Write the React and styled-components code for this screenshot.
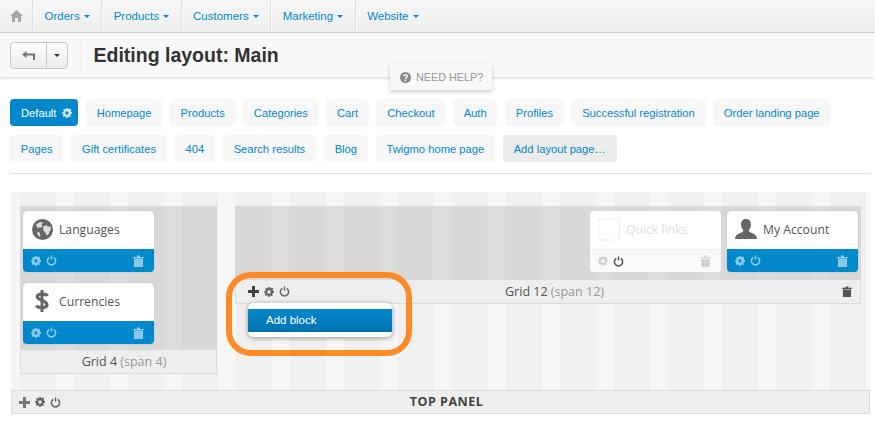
import React from 'react';
import styled, { createGlobalStyle, css } from 'styled-components';

const GlobalStyle = createGlobalStyle`
  html, body {
    margin: 0;
    padding: 0;
    background: #fff;
    font-family: "Liberation Sans", Arial, sans-serif;
  }
`;

const Page = styled.div`
  position: relative;
  width: 875px;
  height: 430px;
  overflow: hidden;
  background: #fff;
`;

/* top menu */
const Nav = styled.nav`
  display: flex;
  height: 33px;
  background: linear-gradient(#f7f7f7, #eeeeee);
  border-bottom: 1px solid #d9d9d9;
  box-sizing: border-box;
`;

const HomeItem = styled.div`
  width: 33px;
  display: flex;
  align-items: center;
  justify-content: center;
  border-right: 1px solid #dfdfdf;
  box-sizing: border-box;
`;

const NavItem = styled.a`
  display: flex;
  align-items: center;
  gap: 4px;
  padding: 0 11.5px;
  font-size: 11.5px;
  color: #0388cc;
  border-right: ${(p) => (p.$last ? 'none' : '1px solid #dfdfdf')};
  box-shadow: inset 1px 0 0 #fafafa;
`;

const Caret = styled.span`
  width: 0;
  height: 0;
  border-left: 3px solid transparent;
  border-right: 3px solid transparent;
  border-top: 3px solid ${(p) => p.$color || '#0388cc'};
`;

/* title bar */
const TitleBar = styled.header`
  display: flex;
  align-items: center;
  height: 44px;
  padding-left: 10px;
  background: #f9f9f9;
  box-shadow: 0 1px 3px rgba(0, 0, 0, 0.18);
  position: relative;
`;

const BackGroup = styled.div`
  display: flex;
  height: 27px;
  width: 58px;
  border: 1px solid #c8c8c8;
  border-radius: 4px;
  background: linear-gradient(#fdfdfd, #ececec);
  box-sizing: border-box;
`;

const BackButton = styled.div`
  width: 35px;
  display: flex;
  align-items: center;
  justify-content: center;
  border-right: 1px solid #c8c8c8;
`;

const DropButton = styled.div`
  flex: 1;
  display: flex;
  align-items: center;
  justify-content: center;
`;

const TitleDivider = styled.div`
  width: 1px;
  height: 33px;
  margin: 0 12.5px 0 12px;
  background: #efefef;
`;

const Title = styled.h1`
  margin: 0;
  font-size: 19.5px;
  font-weight: 700;
  color: #333;
`;

const HelpTab = styled.div`
  position: absolute;
  left: 390px;
  top: 64px;
  width: 102px;
  height: 26px;
  display: flex;
  align-items: center;
  gap: 5px;
  padding-left: 10px;
  box-sizing: border-box;
  background: #f8f8f8;
  box-shadow: 0 2px 4px rgba(0, 0, 0, 0.2);
  font-size: 10.8px;
  color: #9a9a9a;
  z-index: 2;
`;

/* layout tabs */
const Tabs = styled.div`
  margin: 22px 4px 0 10px;
  padding-bottom: 11px;
  border-bottom: 1px solid #e2e2e2;
  display: flex;
  flex-direction: column;
  gap: 9px;
`;

const TabRow = styled.div`
  display: flex;
  gap: ${(p) => p.$gap}px;
`;

const Tab = styled.a`
  display: flex;
  align-items: center;
  gap: 5.5px;
  height: 27px;
  padding: 0 ${(p) => (p.$active ? 6.5 : 10.8)}px 0 ${(p) => (p.$active ? 11 : 10.8)}px;
  border-radius: 4px;
  font-size: 11.2px;
  background: #f7f7f7;
  color: #0388cc;
  ${(p) =>
    p.$active &&
    css`
      background: #0388cc;
      color: #fff;
    `}
  ${(p) =>
    p.$muted &&
    css`
      background: #ececec;
      color: #0388cc;
    `}
`;

/* editor canvas */
const Canvas = styled.section`
  margin: 18px 5px 0 11px;
  padding-top: 14px;
  height: 222px;
  box-sizing: border-box;
  background: repeating-linear-gradient(
    90deg,
    #f6f6f6 0,
    #f6f6f6 9px,
    #f0f0f0 9px,
    #f0f0f0 45px,
    #f6f6f6 45px,
    #f6f6f6 54px
  );
  position: relative;
  display: flex;
  flex-direction: column;
  justify-content: space-between;
`;

const GridRow = styled.div`
  display: flex;
  align-items: flex-start;
  padding-left: 9px;
  gap: 18px;
`;

const GridBox = styled.div`
  width: ${(p) => p.$width}px;
  position: relative;
`;

const GridBody = styled.div`
  min-height: ${(p) => p.$height}px;
  box-sizing: border-box;
  padding: 5px 3px 0;
  display: flex;
  flex-direction: ${(p) => (p.$column ? 'column' : 'row')};
  justify-content: ${(p) => (p.$column ? 'flex-start' : 'flex-end')};
  gap: ${(p) => (p.$column ? 11 : 6)}px;
  background: repeating-linear-gradient(
    90deg,
    #d8d8d8 0,
    #d8d8d8 36px,
    #dcdcdc 36px,
    #dcdcdc 54px
  );
`;

const GridFooter = styled.div`
  height: 24px;
  box-sizing: border-box;
  background: #eeeeee;
  border: 1px solid #dcdcdc;
  border-top: none;
  display: flex;
  align-items: center;
  padding: 0 8px 0 12px;
  font-family: "Open Sans", sans-serif;
  font-size: 12.5px;
  color: #555;
  position: relative;
`;

const FooterLabel = styled.div`
  flex: 1;
  text-align: center;
  padding-left: ${(p) => p.$left || 0}px;
  padding-right: ${(p) => p.$right || 0}px;
  span {
    color: #999;
  }
`;

const Block = styled.div`
  width: 131px;
  height: 61px;
  border-radius: 4px;
  overflow: hidden;
  background: #fff;
  box-shadow: ${(p) => (p.$off ? 'none' : '0 0 1px 0 #888')};
  display: flex;
  flex-direction: column;
`;

const BlockHead = styled.div`
  height: 38px;
  flex: none;
  display: flex;
  align-items: center;
  padding: 0 0 2px 8px;
  gap: 6px;
  box-sizing: border-box;
  font-family: "Open Sans", sans-serif;
  font-size: 12.2px;
  color: ${(p) => (p.$off ? '#dedede' : '#555')};
`;

const BlockIcon = styled.div`
  width: 22px;
  height: 22px;
  display: flex;
  align-items: center;
  justify-content: center;
`;

const BlockTools = styled.div`
  flex: 1;
  display: flex;
  align-items: center;
  gap: 5px;
  padding: 0 10px 0 8px;
  background: ${(p) => (p.$off ? '#fafafa' : '#0388cc')};
  border-top: ${(p) => (p.$off ? '1px solid #f0f0f0' : 'none')};
`;

const Spacer = styled.div`
  flex: 1;
`;

const ToolGroup = styled.div`
  display: flex;
  align-items: center;
  gap: 5px;
`;

const Dropdown = styled.div`
  position: absolute;
  left: 13px;
  top: 97px;
  width: 144px;
  height: 34px;
  box-sizing: border-box;
  padding: 6px 0 5px;
  background: #fff;
  border-radius: 5px;
  box-shadow: 0 1px 5px rgba(0, 0, 0, 0.4);
  z-index: 3;
`;

const DropdownItem = styled.div`
  height: 23px;
  line-height: 23px;
  padding-left: 18px;
  font-size: 11.5px;
  color: #fff;
  background: linear-gradient(#0388cc, #0272ae);
`;

const Callout = styled.div`
  position: absolute;
  left: 226px;
  top: 272px;
  width: 186px;
  height: 84px;
  box-sizing: border-box;
  border: 6px solid #fd8a27;
  border-radius: 25px;
  z-index: 4;
`;

const TopPanel = styled.div`
  height: 24px;
  box-sizing: border-box;
  background: #eeeeee;
  border: 1px solid #dcdcdc;
  display: flex;
  align-items: center;
  padding-left: 7px;
  position: relative;
`;

const TopPanelLabel = styled.div`
  flex: 1;
  text-align: center;
  font-family: "Open Sans", sans-serif;
  font-size: 12.5px;
  font-weight: 700;
  letter-spacing: 0.5px;
  color: #444;
  padding: 0 37px 1px 0;
`;

/* icons */
const Gear = ({ color = '#fff', size = 10 }) => (
  <svg width={size} height={size} viewBox="0 0 12 12">
    <path
      fill={color}
      fillRule="evenodd"
      d="M5 0h2l.3 1.6 1-.4L9.700.5l1.500 1.500-.8 1.300.5 1.100L12 5v2l-1.600.3-.5 1 .9 1.400-1.500 1.500-1.400-.9-1 .5L7 12H5l-.3-1.700-1-.4-1.400.9L.8 9.300l.9-1.400-.5-1L0 7V5l1.600-.3.5-1-.8-1.400L2.800.8l1.300.8 1-.4zM6 4a2 2 0 100 4 2 2 0 000-4z"
    />
  </svg>
);

const Power = ({ color = '#fff', size = 11 }) => (
  <svg width={size} height={size} viewBox="0 0 12 12" fill="none" stroke={color} strokeWidth="1.7">
    <path d="M3.600 2.500a4.500 4.500 0 104.800 0" />
    <path d="M6 .5v4.500" strokeWidth="1.500" />
  </svg>
);

const Trash = ({ color = '#fff', size = 11 }) => (
  <svg width={size} height={size + 1} viewBox="0 0 11 12">
    <path fill={color} d="M0 2h11v1.200H0zM4 .5h3V2H4zM1 3.800h9V12H1z" />
    <path stroke="rgba(0,0,0,0.12)" strokeWidth="0.7" d="M3.200 5v6M5.500 5v6M7.800 5v6" />
  </svg>
);

const Plus = ({ color = '#444', size = 11 }) => (
  <svg width={size} height={size} viewBox="0 0 11 11">
    <path fill={color} d="M4 0h3v4h4v3H7v4H4V7H0V4h4z" />
  </svg>
);

const Home = () => (
  <svg width="13" height="12" viewBox="0 0 13 12">
    <path fill="#a8a8a8" d="M6.500 0L13 6h-2v6H8V8H5v4H2V6H0z" />
  </svg>
);

const Back = () => (
  <svg width="13" height="9" viewBox="0 0 13 9">
    <path fill="#777" d="M4.500 0v2.500H13V9h-2V4.500H4.500V7L0 3.500z" />
  </svg>
);

const Question = () => (
  <svg width="11" height="11" viewBox="0 0 12 12">
    <circle cx="6" cy="6" r="6" fill="#8a8a8a" />
    <path fill="none" stroke="#f8f8f8" strokeWidth="1.600" d="M4 4.600C4 2.600 8 2.600 8 4.500 8 5.800 6 5.800 6 7.300" />
    <rect x="5.100" y="8.300" width="1.800" height="1.700" fill="#f8f8f8" />
  </svg>
);

const Globe = () => (
  <svg width="21" height="21" viewBox="0 0 21 21">
    <circle cx="10.500" cy="10.500" r="10.500" fill="#666" />
    <path fill="#ddd" d="M4 5.500l4-2.500 3 .5-1.500 2 1 1.500-2 2-1-1-1.500 1.500zM11 8l3-2 1.500 1.500 3 0 .5 3-1.500 2-1 3-2 1-1-3-2-1.500zM5 13l2.500.5 1 3-1 1.500-2-2.500z" />
  </svg>
);

const Dollar = () => (
  <svg width="14" height="22" viewBox="0 0 14 22">
    <rect x="5.500" y="0" width="3" height="22" fill="#666" />
    <path fill="none" stroke="#666" strokeWidth="3.200" d="M12.500 6C11.500 4 3 3 2.200 6.500 1.500 10 12 10 12 14.800 12 18.500 3 18.500 1.500 15.500" />
  </svg>
);

const User = () => (
  <svg width="22" height="20" viewBox="0 0 22 20">
    <path fill="#666" d="M11 0c3.500 0 5 2.500 5 5.500 0 2.500-1 4.500-2.200 5.600 0 1.600.5 2 2.700 3 2.500 1 5 1.500 5.500 5.900H0c.5-4.400 3-4.900 5.500-5.900 2.200-1 2.700-1.400 2.700-3C7 10 6 8 6 5.500 6 2.500 7.500 0 11 0z" />
  </svg>
);

const Placeholder = () => (
  <svg width="23" height="23" viewBox="0 0 23 23">
    <rect x="0.500" y="0.500" width="22" height="22" fill="none" stroke="#d8d8d8" strokeDasharray="1.500 2" />
  </svg>
);

const tabRows = [
  {
    gap: 7.5,
    tabs: [
      { label: 'Default', active: true },
      { label: 'Homepage' },
      { label: 'Products' },
      { label: 'Categories' },
      { label: 'Cart' },
      { label: 'Checkout' },
      { label: 'Auth' },
      { label: 'Profiles' },
      { label: 'Successful registration' },
      { label: 'Order landing page' },
    ],
  },
  {
    gap: 7.9,
    tabs: [
      { label: 'Pages' },
      { label: 'Gift certificates' },
      { label: '404' },
      { label: 'Search results' },
      { label: 'Blog' },
      { label: 'Twigmo home page' },
      { label: 'Add layout page…', muted: true },
    ],
  },
];

const navItems = ['Orders', 'Products', 'Customers', 'Marketing', 'Website'];

const LayoutBlock = ({ icon, name, off }) => (
  <Block $off={off}>
    <BlockHead $off={off}>
      <BlockIcon>{icon}</BlockIcon>
      {name}
    </BlockHead>
    <BlockTools $off={off}>
      <Gear color={off ? '#d0d0d0' : '#8fcbea'} />
      <Power color={off ? '#555' : '#8fcbea'} />
      <Spacer />
      <Trash color={off ? '#d8d8d8' : '#8fcbea'} />
    </BlockTools>
  </Block>
);

const App = () => (
  <Page>
    <GlobalStyle />
    <Nav>
      <HomeItem>
        <Home />
      </HomeItem>
      {navItems.map((item, i) => (
        <NavItem key={item} $last={i === navItems.length - 1}>
          {item}
          <Caret />
        </NavItem>
      ))}
    </Nav>
    <TitleBar>
      <BackGroup>
        <BackButton>
          <Back />
        </BackButton>
        <DropButton>
          <Caret $color="#333" />
        </DropButton>
      </BackGroup>
      <TitleDivider />
      <Title>Editing layout: Main</Title>
    </TitleBar>
    <HelpTab>
      <Question />
      NEED HELP?
    </HelpTab>
    <Tabs>
      {tabRows.map((row, i) => (
        <TabRow key={i} $gap={row.gap}>
          {row.tabs.map((tab) => (
            <Tab key={tab.label} $active={tab.active} $muted={tab.muted}>
              {tab.label}
              {tab.active && <Gear color="#cfe9f6" size={10} />}
            </Tab>
          ))}
        </TabRow>
      ))}
    </Tabs>
    <Canvas>
      <GridRow>
        <GridBox $width={197}>
          <GridBody $height={144} $column>
            <LayoutBlock icon={<Globe />} name="Languages" />
            <LayoutBlock icon={<Dollar />} name="Currencies" />
          </GridBody>
          <GridFooter>
            <FooterLabel $left={7}>
              Grid 4 <span>(span 4)</span>
            </FooterLabel>
          </GridFooter>
        </GridBox>
        <GridBox $width={626}>
          <GridBody $height={74}>
            <LayoutBlock icon={<Placeholder />} name="Quick links" off />
            <LayoutBlock icon={<User />} name="My Account" />
          </GridBody>
          <GridFooter>
            <ToolGroup>
              <Plus />
              <Gear color="#666" />
              <Power color="#666" />
            </ToolGroup>
            <FooterLabel $right={23}>
              Grid 12 <span>(span 12)</span>
            </FooterLabel>
            <Trash color="#555" size={10} />
          </GridFooter>
          <Dropdown>
            <DropdownItem>Add block</DropdownItem>
          </Dropdown>
        </GridBox>
      </GridRow>
      <TopPanel>
        <ToolGroup>
          <Plus color="#777" />
          <Gear color="#666" />
          <Power color="#666" />
        </ToolGroup>
        <TopPanelLabel>TOP PANEL</TopPanelLabel>
      </TopPanel>
    </Canvas>
    <Callout />
  </Page>
);

export default App;
